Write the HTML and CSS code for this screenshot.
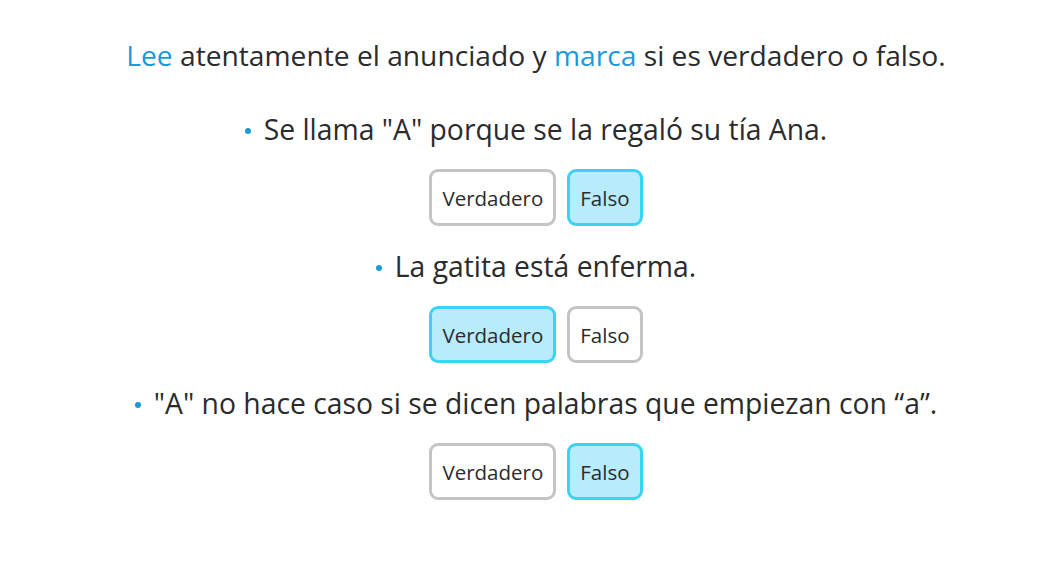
FILE: index.html
```html
<!DOCTYPE html>
<html lang="es">
<head>
<meta charset="utf-8">
<link rel="stylesheet" href="styles.css">
</head>
<body>
<main class="quiz">
  <p class="intro"><span class="hl">Lee</span> atentamente el anunciado y <span class="hl">marca</span> si es verdadero o falso.</p>
  <section class="item">
    <p class="statement"><span class="dot"></span>Se llama "A" porque se la regaló su tía Ana.</p>
    <div class="choices">
      <button class="choice">Verdadero</button>
      <button class="choice selected">Falso</button>
    </div>
  </section>
  <section class="item">
    <p class="statement"><span class="dot"></span>La gatita está enferma.</p>
    <div class="choices">
      <button class="choice selected">Verdadero</button>
      <button class="choice">Falso</button>
    </div>
  </section>
  <section class="item">
    <p class="statement"><span class="dot"></span>"A" no hace caso si se dicen palabras que empiezan con “a”.</p>
    <div class="choices">
      <button class="choice">Verdadero</button>
      <button class="choice selected">Falso</button>
    </div>
  </section>
</main>
</body>
</html>
```

FILE: styles.css
```css
html, body {
  margin: 0;
  padding: 0;
  background: #ffffff;
}
body {
  font-family: "Open Sans", "Noto Sans", sans-serif;
  color: #2b2b2b;
}
.quiz {
  display: flex;
  flex-direction: column;
  align-items: center;
  padding: 38px 0 0 15px;
}
.intro {
  margin: 0 0 40px;
  font-size: 28.2px;
  line-height: 34px;
  text-align: center;
}
.hl {
  color: #1a9ad8;
}
.item {
  display: flex;
  flex-direction: column;
  align-items: center;
  gap: 23px;
  margin-bottom: 23px;
}
.statement {
  margin: 0;
  font-size: 28.3px;
  line-height: 34px;
  display: flex;
  align-items: center;
}
.dot {
  width: 6px;
  height: 6px;
  border-radius: 50%;
  background: #1a9ad8;
  margin: 4px 13px 0 0;
}
.choices {
  display: flex;
  gap: 11px;
}
.choice {
  height: 57px;
  box-sizing: border-box;
  padding: 0 10px;
  border: 3px solid #c4c4c4;
  border-radius: 9px;
  background: #ffffff;
  font-family: inherit;
  font-size: 20.5px;
  color: #2b2b2b;
}
.choice.selected {
  background: #b8ecfd;
  border-color: #3ad3f5;
}
```
